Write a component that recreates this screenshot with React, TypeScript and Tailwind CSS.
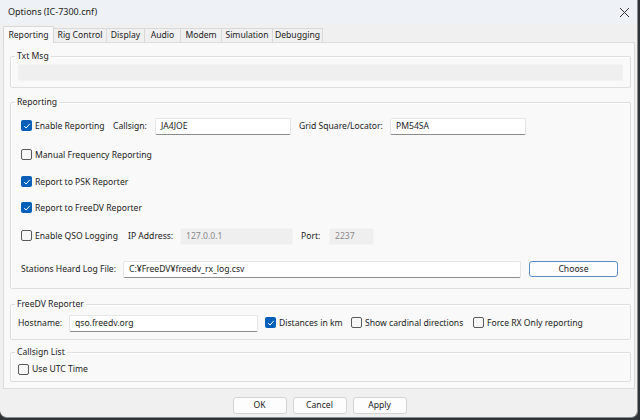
import React from 'react';

const font = { fontFamily: '"Noto Sans", "Open Sans", sans-serif' };

const Check: React.FC<{ checked?: boolean; label: string; className?: string }> = ({ checked, label, className }) => (
  <div className={`flex items-center ${className ?? ''}`}>
    {checked ? (
      <span className="w-[11px] h-[11px] rounded-[2px] bg-[#005fb8] flex items-center justify-center shrink-0">
        <svg width="8" height="8" viewBox="0 0 8 8">
          <path d="M1.2 4.2 L3.1 6 L6.8 1.8" stroke="#fff" strokeWidth="1" fill="none" />
        </svg>
      </span>
    ) : (
      <span className="w-[11px] h-[11px] rounded-[2px] border border-[#5a5a5a] bg-[#f7f7f7] shrink-0"></span>
    )}
    <span className="ml-[3px] whitespace-nowrap">{label}</span>
  </div>
);

const Field: React.FC<{ value?: string; disabled?: boolean; className?: string }> = ({ value, disabled, className }) => (
  <div
    className={`h-[17px] flex items-center px-[5px] rounded-[2px] whitespace-nowrap ${
      disabled
        ? 'bg-[#efefef] border border-[#f4f4f4] text-[#8a8a8a]'
        : 'bg-white border border-[#e6e6e6] border-b-[#8c8c8c] text-[#1b1b1b]'
    } ${className ?? ''}`}
  >
    {value}
  </div>
);

const Group: React.FC<{ title: string; className?: string; children: React.ReactNode }> = ({ title, className, children }) => (
  <fieldset className={`border border-[#dedede] rounded-[2px] shadow-[inset_1px_1px_0_#ffffff] ${className ?? ''}`}>
    <legend className="ml-[4px] px-[2px] leading-[12px] text-[8.6px]">{title}</legend>
    {children}
  </fieldset>
);

const tabs = ['Rig Control', 'Display', 'Audio', 'Modem', 'Simulation', 'Debugging'];
const tabWidths = ['w-[53px]', 'w-[38px]', 'w-[36px]', 'w-[41px]', 'w-[51px]', 'w-[50px]'];

export default function App() {
  return (
    <div className="w-[640px] h-[420px] bg-[#2e3338] text-[8.6px] text-[#1b1b1b]" style={font}>
      <div className="w-[638px] h-[418px] flex flex-col bg-[#f0f0f0] border-r border-b border-[#8c8c8c] rounded-b-[7px] overflow-hidden">
        {/* Title bar */}
        <div className="h-[24px] shrink-0 bg-[#eef2f6] flex items-center justify-between pl-[8px] pr-[6px]">
          <span className="text-[9px]">Options (IC-7300.cnf)</span>
          <svg width="11" height="11" viewBox="0 0 11 11" className="mr-[1px]">
            <path d="M1 1 L10 10 M10 1 L1 10" stroke="#333" strokeWidth="1" />
          </svg>
        </div>

        {/* Tabs */}
        <div className="pl-[3px] pt-[2px] h-[19px] shrink-0 flex items-end">
          <div className="relative z-10 w-[51px] h-[17px] bg-[#f9f9f9] border border-b-0 border-[#d9d9d9] flex items-center justify-center">
            Reporting
          </div>
          {tabs.map((t, i) => (
            <div
              key={t}
              className={`${tabWidths[i]} h-[15px] bg-[#f0f0f0] border border-l-0 border-[#d9d9d9] flex items-center justify-center`}
            >
              {t}
            </div>
          ))}
        </div>

        {/* Panel */}
        <div className="-mt-px ml-[3px] w-[632px] h-[347px] shrink-0 bg-[#f9f9f9] border border-[#dcdcdc] pl-[6px] pr-[3px] flex flex-col">
          <Group title="Txt Msg" className="mt-[7px]">
            <div className="pl-[7px] pr-[7px] pt-[2px] pb-[6px]">
              <div className="h-[17px] bg-[#efefef] border border-[#f3f3f3] rounded-[2px]"></div>
            </div>
          </Group>

          <Group title="Reporting" className="mt-[8px]">
            <div className="pl-[10px] pt-[9px] pb-[10px] flex flex-col">
              <div className="h-[18px] flex items-center">
                <Check checked label="Enable Reporting" className="w-[92px]" />
                <span className="w-[42px]">Callsign:</span>
                <Field value="JA4JOE" className="w-[136px]" />
                <span className="ml-[8px] w-[91px]">Grid Square/Locator:</span>
                <Field value="PM54SA" className="w-[136px]" />
              </div>
              <div className="h-[18px] mt-[11px] flex items-center">
                <Check label="Manual Frequency Reporting" />
              </div>
              <div className="h-[18px] mt-[9px] flex items-center">
                <Check checked label="Report to PSK Reporter" />
              </div>
              <div className="h-[18px] mt-[8px] flex items-center">
                <Check checked label="Report to FreeDV Reporter" />
              </div>
              <div className="h-[18px] mt-[10px] flex items-center">
                <Check label="Enable QSO Logging" className="w-[107px]" />
                <span className="w-[52px]">IP Address:</span>
                <Field disabled value="127.0.0.1" className="w-[113px]" />
                <span className="ml-[8px] w-[28px]">Port:</span>
                <Field disabled value="2237" className="w-[45px]" />
              </div>
              <div className="h-[18px] mt-[15px] flex items-center">
                <span className="w-[102px]">Stations Heard Log File:</span>
                <Field value="C:¥FreeDV¥freedv_rx_log.csv" className="w-[398px]" />
                <button className="ml-[8px] w-[89px] h-[16px] bg-[#fdfdfd] border border-[#5d8bc4] rounded-[3px] flex items-center justify-center">
                  Choose
                </button>
              </div>
            </div>
          </Group>

          <Group title="FreeDV Reporter" className="mt-[9px]">
            <div className="pl-[7px] pt-[4px] pb-[7px] flex items-center">
              <div className="h-[18px] flex items-center">
                <span className="w-[51px]">Hostname:</span>
                <Field value="qso.freedv.org" className="w-[189px]" />
                <Check checked label="Distances in km" className="ml-[7px] w-[86px]" />
                <Check label="Show cardinal directions" className="w-[122px]" />
                <Check label="Force RX Only reporting" />
              </div>
            </div>
          </Group>

          <Group title="Callsign List" className="mt-[6px]">
            <div className="pl-[7px] pt-[4px] pb-[5px] flex items-center">
              <Check label="Use UTC Time" className="h-[14px]" />
            </div>
          </Group>
        </div>

        {/* Buttons */}
        <div className="flex-1 flex justify-center gap-[6px] pt-[8px] pl-[2px]">
          <button className="w-[54px] h-[17px] bg-[#fdfdfd] border border-[#d4d4d4] rounded-[3px]">OK</button>
          <button className="w-[54px] h-[17px] bg-[#fdfdfd] border border-[#d4d4d4] rounded-[3px]">Cancel</button>
          <button className="w-[54px] h-[17px] bg-[#fdfdfd] border border-[#d4d4d4] rounded-[3px]">Apply</button>
        </div>
      </div>
    </div>
  );
}
